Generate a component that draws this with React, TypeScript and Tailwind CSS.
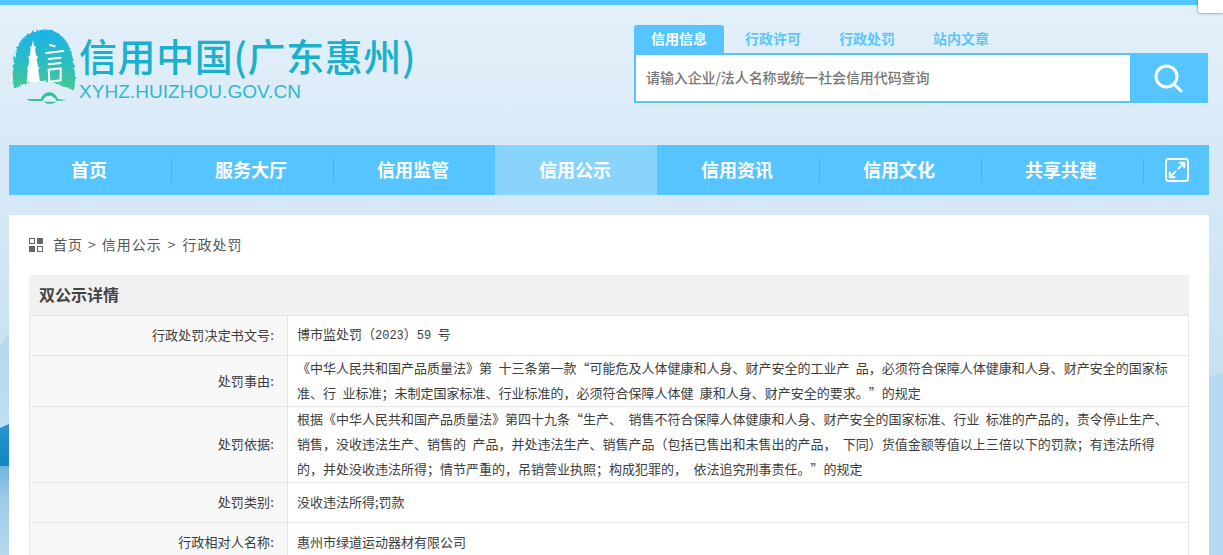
import React from 'react';

const CJK = 'font-["Noto_Sans_CJK_SC","Liberation_Sans",sans-serif]';

const navItems = ['首页', '服务大厅', '信用监管', '信用公示', '信用资讯', '信用文化', '共享共建'];
const tabs = ['行政许可', '行政处罚', '站内文章'];

interface Row {
  label: string;
  lines: React.ReactNode[];
  height: string;
}

const rows: Row[] = [
  {
    label: '行政处罚决定书文号:',
    height: 'h-[40px]',
    lines: [
      <>博市监处罚（<span className="font-['Liberation_Mono'] text-[12px]">2023</span>）<span className="font-['Liberation_Mono'] text-[12px]">59</span> 号</>,
    ],
  },
  {
    label: '处罚事由:',
    height: 'h-[51px]',
    lines: [
      '《中华人民共和国产品质量法》第 十三条第一款“可能危及人体健康和人身、财产安全的工业产 品，必须符合保障人体健康和人身、财产安全的国家标',
      '准、行 业标准；未制定国家标准、行业标准的，必须符合保障人体健 康和人身、财产安全的要求。”的规定',
    ],
  },
  {
    label: '处罚依据:',
    height: 'h-[76px]',
    lines: [
      '根据《中华人民共和国产品质量法》第四十九条“生产、 销售不符合保障人体健康和人身、财产安全的国家标准、行业 标准的产品的，责令停止生产、',
      '销售，没收违法生产、销售的 产品，并处违法生产、销售产品（包括已售出和未售出的产品， 下同）货值金额等值以上三倍以下的罚款；有违法所得',
      '的，并处没收违法所得；情节严重的，吊销营业执照；构成犯罪的， 依法追究刑事责任。”的规定',
    ],
  },
  { label: '处罚类别:', height: 'h-[40px]', lines: ['没收违法所得;罚款'] },
  { label: '行政相对人名称:', height: 'h-[40px]', lines: ['惠州市绿道运动器材有限公司'] },
];

const Logo = () => (
  <svg width="70" height="85" viewBox="0 0 210 255" className="shrink-0">
    <defs>
      <linearGradient id="logoFill" x1="0" y1="0" x2="0" y2="1">
        <stop offset="0" stopColor="#1cb2ea" />
        <stop offset="0.55" stopColor="#2dbdc0" />
        <stop offset="1" stopColor="#45c98f" />
      </linearGradient>
      <filter id="brush" x="-10%" y="-10%" width="120%" height="120%">
        <feTurbulence type="fractalNoise" baseFrequency="0.14" numOctaves="3" seed="4" />
        <feDisplacementMap in="SourceGraphic" scale="12" />
      </filter>
    </defs>
    <path
      filter="url(#brush)"
      fill="url(#logoFill)"
      d="M98 14C142 10 176 44 186 90C196 130 198 168 192 196C176 190 158 184 140 176C115 166 85 166 60 172C42 176 26 184 12 190C6 150 8 100 24 62C36 34 64 16 98 14Z"
    />
    <path
      fill="#fff"
      d="M69 44L72 62L78 66L75 74L79 92L84 96L80 104L84 124L88 128L85 136L90 170L50 172L53 136L50 128L55 124L58 104L54 96L59 92L62 74L60 66L66 62Z"
    />
    <g stroke="#fff" strokeWidth="6" fill="none" strokeLinecap="round">
      <path d="M120 60L134 64" />
      <path d="M108 84L160 78" />
      <path d="M116 102L152 98" />
      <path d="M116 118L152 114" />
      <path d="M116 134L118 170L152 166L152 130Z" />
    </g>
    <path
      fill="#33c39a"
      d="M50 222L92 222C98 208 108 202 118 202C130 202 138 210 144 222L172 226L140 228C134 216 126 212 118 212C108 212 102 218 98 228L60 228Z"
    />
    <path fill="#33c39a" d="M100 230L142 230L126 236L112 236Z" />
  </svg>
);

// scenery behind the page, only the strips at both sides show
const Backdrop = () => (
  <svg className="absolute inset-0 -z-10" width="1223" height="555" viewBox="0 0 1223 555">
    <defs>
      <linearGradient id="sky" x1="0" y1="0" x2="0" y2="1">
        <stop offset="0" stopColor="#e3f0fa" />
        <stop offset="0.4" stopColor="#d4e7f5" />
        <stop offset="0.75" stopColor="#c3e0f2" />
        <stop offset="1" stopColor="#c3e0f2" />
      </linearGradient>
      <linearGradient id="ridge" x1="0" y1="0" x2="0" y2="1">
        <stop offset="0" stopColor="#b4d8ef" />
        <stop offset="1" stopColor="#bfdef2" />
      </linearGradient>
      <linearGradient id="water" x1="0" y1="0" x2="0" y2="1">
        <stop offset="0" stopColor="#2e94cd" />
        <stop offset="1" stopColor="#0f86c4" />
      </linearGradient>
      <linearGradient id="reflect" x1="0" y1="0" x2="0" y2="1">
        <stop offset="0" stopColor="#6fb4dc" />
        <stop offset="0.35" stopColor="#9ccae7" />
        <stop offset="1" stopColor="#b5d8ee" />
      </linearGradient>
    </defs>
    <rect width="1223" height="555" fill="url(#sky)" />
    <path d="M0 345L9 333L9 430L0 430Z" fill="url(#ridge)" />
    <path d="M0 428L9 424L9 466L0 466Z" fill="url(#water)" />
    <rect x="0" y="466" width="9" height="89" fill="url(#reflect)" />
    <path d="M1209 378C1215 375 1219 374 1223 373L1223 555L1209 555Z" fill="#b7d9ef" />
  </svg>
);

export default function App() {
  return (
    <div className={`relative h-screen overflow-hidden [text-spacing-trim:space-all] ${CJK}`}>
      <Backdrop />
      <div className="h-[5px] bg-[#55c4ff]" />

      {/* stray white popup in the top right corner */}
      <div className="absolute right-0 top-0 h-[13px] w-[25px] rounded-bl-[3px] bg-white shadow-[0_0_3px_rgba(0,0,0,0.55)]" />

      <header className="flex h-[140px] items-start justify-between pl-[10px] pr-[15px]">
        <div className="mt-[20px] flex">
          <Logo />
          <div className="ml-[-1px] flex flex-col">
            <div className="mt-[7px] whitespace-nowrap text-[38px] font-medium leading-[46px] tracking-[0.6px] text-[#1bb0cb]">信用中国(广东惠州)</div>
            <div className="mt-[2px] whitespace-nowrap font-['Liberation_Sans'] text-[19px] leading-[24px] tracking-[0.05px] text-[#2fb7d2]">XYHZ.HUIZHOU.GOV.CN</div>
          </div>
        </div>

        <div className="mt-[20px] w-[574px]">
          <div className="flex h-[28px] text-[14px] font-bold">
            <div className="flex w-[90px] items-center justify-center rounded-t-[3px] bg-[#55c4ff] pb-[2px] text-white">信用信息</div>
            {tabs.map((tab, i) => (
              <div key={tab} className={`flex items-center whitespace-nowrap pb-[2px] text-[#5cc6fb] ${i === 0 ? 'ml-[21px]' : i === 1 ? 'ml-[38px]' : 'ml-[38px]'}`}>
                {tab}
              </div>
            ))}
          </div>
          <div className="flex h-[50px] border-2 border-[#55c4ff] bg-white">
            <input
              className="min-w-0 flex-1 bg-white px-[10px] pb-[2px] text-[14px] font-medium tracking-[-0.1px] outline-none placeholder:text-[#777]"
              placeholder="请输入企业/法人名称或统一社会信用代码查询"
            />
            <button className="flex w-[76px] items-center justify-center bg-[#55c4ff]">
              <svg width="30" height="30" viewBox="0 0 30 30" fill="none" stroke="#fff" strokeWidth="3" strokeLinecap="round">
                <circle cx="13.5" cy="13.5" r="10.5" />
                <path d="M21.5 21.5L28 28" />
              </svg>
            </button>
          </div>
        </div>
      </header>

      <nav className="mx-[9px] flex h-[50px] w-[1200px] bg-[#55c4ff] text-[18px] font-bold text-white">
        {navItems.map((item, i) => (
          <div key={item} className={`relative flex w-[162px] items-center justify-center pb-[2px] pr-[2px] ${i === 3 ? 'bg-[#89d4fd]' : ''}`}>
            {item}
            {i !== 2 && i !== 3 && <span className="absolute -right-px top-[13px] h-[24px] w-px bg-[#45b2ea]" />}
          </div>
        ))}
        <div className="flex flex-1 items-center justify-center pl-[2px]">
          <svg width="24" height="24" viewBox="0 0 24 24" fill="none" stroke="#fff" strokeWidth="2" strokeLinecap="round" strokeLinejoin="round">
            <rect x="1" y="1" width="22" height="22" rx="2.5" />
            <path d="M13.5 10.5L19 5M14.5 4.8H19.2V9.5" />
            <path d="M10.5 13.5L5 19M9.5 19.2H4.8V14.5" />
          </svg>
        </div>
      </nav>

      <main className="mx-[9px] mt-[20px] w-[1200px] bg-white px-[20px]">
        <div className="flex h-[60px] items-center text-[14px] tracking-[1px] text-[#555]">
          <svg width="15" height="15" viewBox="0 0 15 15" className="mr-[9px]">
            <rect x="0.5" y="0.5" width="5" height="5" fill="none" stroke="#666" />
            <rect x="8" y="0" width="6" height="6" fill="#666" />
            <rect x="0" y="8" width="6" height="6" fill="#666" />
            <rect x="8.5" y="8.5" width="5" height="5" fill="none" stroke="#666" />
          </svg>
          <span className="pb-[2px]">首页</span>
          <span className="mx-[5px] pb-[2px]">&gt;</span>
          <span className="pb-[2px]">信用公示</span>
          <span className="mx-[6px] pb-[2px]">&gt;</span>
          <span className="pb-[2px]">行政处罚</span>
        </div>

        <h2 className="flex h-[40px] items-center bg-[#f1f1f1] pb-[2px] pl-[10px] text-[16px] font-bold text-[#444]">双公示详情</h2>

        <div className="border-x border-[#e5e5e5] text-[13px] leading-[25px] text-[#3d3d3d]">
          {rows.map((row) => (
            <div key={row.label} className={`flex border-t border-[#e5e5e5] ${row.height}`}>
              <div className="flex w-[258px] shrink-0 items-center justify-end border-r border-[#e5e5e5] bg-[#f8f8f8] pb-[2px] pr-[13px] tracking-[0.15px]">
                {row.label}
              </div>
              <div className="flex flex-col justify-center pb-[2px] pl-[9px] [word-spacing:3.5px]">
                {row.lines.map((line, i) => (
                  <div key={i} className="whitespace-pre">{line}</div>
                ))}
              </div>
            </div>
          ))}
        </div>
      </main>
    </div>
  );
}
